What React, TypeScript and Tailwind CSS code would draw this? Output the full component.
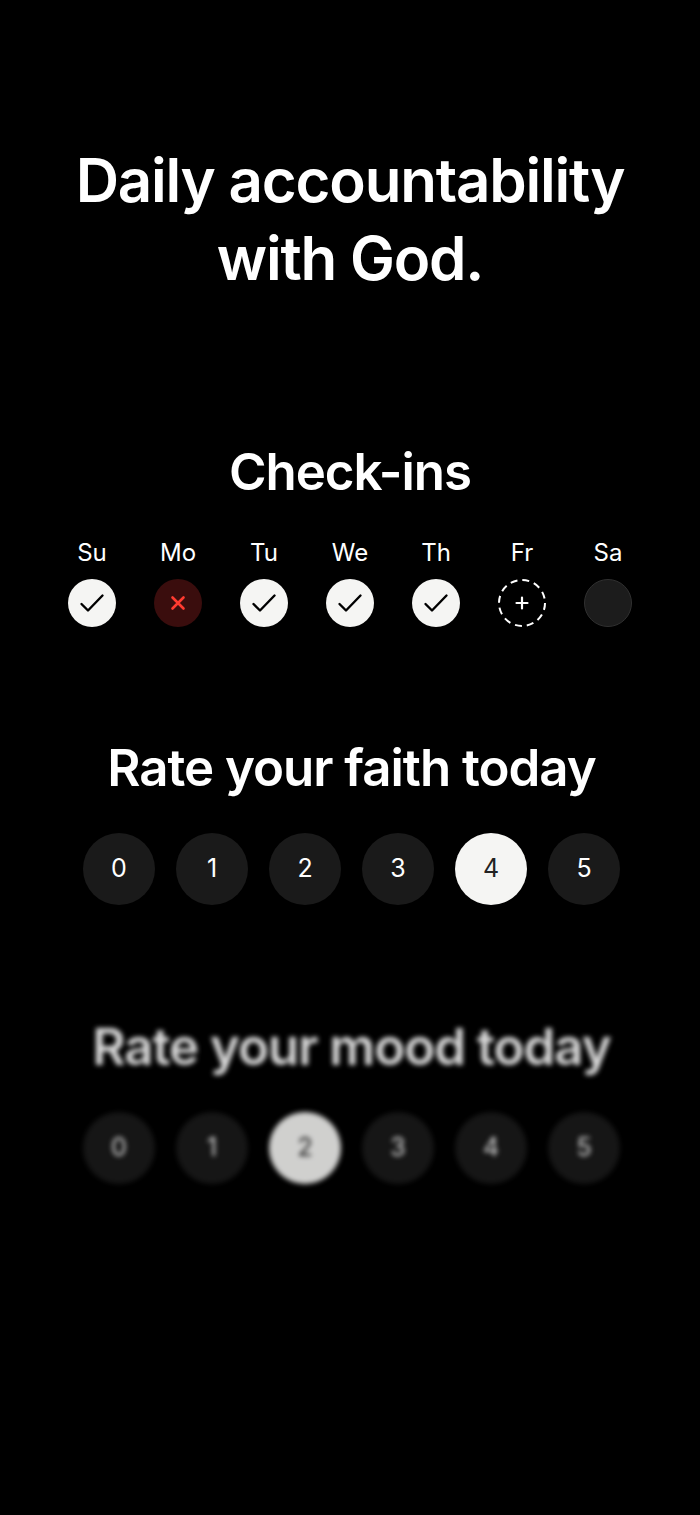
const DAYS = [
  { label: "Su", state: "done" },
  { label: "Mo", state: "missed" },
  { label: "Tu", state: "done" },
  { label: "We", state: "done" },
  { label: "Th", state: "done" },
  { label: "Fr", state: "today" },
  { label: "Sa", state: "future" },
];

function DayDot({ state }: { state: string }) {
  if (state === "done")
    return (
      <div className="w-12 h-12 rounded-full bg-[#f5f5f3]">
        <svg viewBox="0 0 48 48" className="w-12 h-12" fill="none">
          <path d="M13.5 25 L20 31.5 L34.5 16.5" stroke="#000" strokeWidth={2.4} strokeLinecap="round" strokeLinejoin="round" />
        </svg>
      </div>
    );
  if (state === "missed")
    return (
      <div className="w-12 h-12 rounded-full bg-[#3a0d0d]">
        <svg viewBox="0 0 48 48" className="w-12 h-12" fill="none">
          <path d="M18.5 18.5 L29.5 29.5 M29.5 18.5 L18.5 29.5" stroke="#ff3b30" strokeWidth={2.6} strokeLinecap="round" />
        </svg>
      </div>
    );
  if (state === "today")
    return (
      <svg viewBox="0 0 48 48" className="w-12 h-12" fill="none">
        <circle cx="24" cy="24" r="23" stroke="#fff" strokeWidth={2} strokeDasharray="7 5" />
        <path d="M24 18.5 V29.5 M18.5 24 H29.5" stroke="#fff" strokeWidth={2.2} strokeLinecap="round" />
      </svg>
    );
  return <div className="w-12 h-12 rounded-full bg-[#1c1c1c] border border-[#303030]" />;
}

function Rating({ title, selected }: { title: string; selected: number }) {
  return (
    <div className="flex flex-col items-center">
      <h2 className="text-[51px] leading-[60px] font-semibold tracking-[-0.02em]">{title}</h2>
      <div className="flex gap-[21px] mt-[35px]">
        {[0, 1, 2, 3, 4, 5].map((n) => (
          <div
            key={n}
            className={`w-[72px] h-[72px] rounded-full flex items-center justify-center text-[25px] ${
              n === selected ? "bg-[#f5f5f3] text-[#222]" : "bg-[#1a1a1a] text-white"
            }`}
          >
            {n}
          </div>
        ))}
      </div>
    </div>
  );
}

export default function App() {
  return (
    <div
      className="w-[700px] h-[1515px] bg-black text-white flex flex-col items-center pt-[141px] overflow-hidden"
      style={{ fontFamily: "Inter, 'Noto Sans', sans-serif" }}
    >
      <h1 className="text-[60px] leading-[78px] font-semibold tracking-[-0.02em] text-center">
        Daily accountability
        <br />
        with God.
      </h1>

      {/* Check-ins */}
      <div className="flex flex-col items-center mt-[145px]">
        <h2 className="text-[51px] leading-[60px] font-semibold tracking-[-0.02em]">Check-ins</h2>
        <div className="flex gap-[38px] mt-[36px]">
          {DAYS.map((d) => (
            <div key={d.label} className="flex flex-col items-center w-12">
              <span className="text-[24px] leading-[30px]">{d.label}</span>
              <div className="mt-[11px]">
                <DayDot state={d.state} />
              </div>
            </div>
          ))}
        </div>
      </div>

      <div className="mt-[111px] ml-[3px]">
        <Rating title="Rate your faith today" selected={4} />
      </div>

      <div className="mt-[112px] ml-[3px] blur-[2.5px] opacity-85">
        <Rating title="Rate your mood today" selected={2} />
      </div>
    </div>
  );
}
